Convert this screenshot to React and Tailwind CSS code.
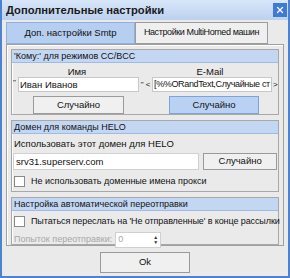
import { X } from 'lucide-react';

const font = { fontFamily: '"Liberation Sans", Arial, sans-serif' };

const Btn = ({ children, active, className = '' }) => (
    <div
        className={`flex items-center justify-center border text-[9.5px] ${active
            ? 'bg-[#b9d1f2] border-[#7ea3d8] text-[#111]'
            : 'bg-[#f0f0f0] border-[#9a9a9a] text-[#111]'
            } ${className}`}
    >
        {children}
    </div>
);

const Group = ({ title, children, className = '' }) => (
    <div className={`border border-[#a8a8a8] shadow-[inset_1px_1px_0_#fff] ${className}`}>
        <div className="h-[13px] bg-[#c3d7f3] border-b border-[#9fbbe3] px-[2px] text-[9px] leading-[13px] text-[#111] whitespace-nowrap">
            {title}
        </div>
        {children}
    </div>
);

const Checkbox = () => (
    <div className="w-[11px] h-[11px] border border-[#8a8a8a] bg-white shrink-0" />
);

export default function App() {
    return (
        <div style={font} className="w-[290px] h-[278px] bg-[#eaeaea] flex flex-col border-x-2 border-b-2 border-[#4d82d2] overflow-hidden">
            {/* Title bar */}
            <div className="h-[20px] -mx-[2px] bg-gradient-to-b from-[#d8e6f8] to-[#bcd1ef] flex items-center justify-between pl-[6px] pr-[3px] shrink-0">
                <span className="text-[11.2px] font-bold text-[#1a1a1a]">Дополнительные настройки</span>
                <div className="w-[14px] h-[14px] bg-[#3f7ad3] flex items-center justify-center">
                    <X size={10} strokeWidth={3} className="text-white" />
                </div>
            </div>

            {/* Tabs */}
            <div className="flex pl-[4px] pt-[2px] h-[24px] shrink-0">
                <div className="w-[129px] flex items-center justify-center bg-[#b6cef0] border border-[#8fb0e0] text-[9.5px] text-[#111]">
                    Доп. настройки Smtp
                </div>
                <div className="w-[133px] flex items-center justify-center bg-[#efefef] border border-[#9c9c9c] text-[9px] tracking-[-0.4px] text-[#111] whitespace-nowrap">
                    Настройки MultiHomed машин
                </div>
            </div>

            {/* Content panel */}
            <div className="mx-[4px] h-[202px] border border-[#a0a0a0] shadow-[inset_1px_1px_0_#fff] px-[4px] pt-[4px] flex flex-col gap-[5px]">
                <Group title="'Кому:' для режимов CC/BCC" className="h-[66px]">
                    <div className="flex text-[9.5px] text-[#111] pt-[2px] h-[13px] leading-[13px]">
                        <div className="w-[130px] text-center">Имя</div>
                        <div className="flex-1 text-center">E-Mail</div>
                    </div>
                    <div className="flex items-center mt-[1px] h-[15px] text-[9.5px] text-[#111]">
                        <span className="w-[5px] ml-[1px] text-[8px] self-start">"</span>
                        <div className="w-[121px] h-[15px] bg-white border border-[#c8c8c8] px-[1px] leading-[13px] overflow-hidden whitespace-nowrap">Иван Иванов</div>
                        <span className="w-[13px] text-center text-[8px] whitespace-nowrap">" &lt;</span>
                        <div className="w-[120px] h-[15px] bg-white border border-[#c8c8c8] px-[1px] leading-[13px] text-[9px] tracking-[-0.35px] overflow-hidden whitespace-nowrap">[%%ORandText,Случайные ст</div>
                        <span className="ml-[1px] text-[8px]">&gt;</span>
                    </div>
                    <div className="flex mt-[4px]">
                        <Btn className="ml-[21px] w-[91px] h-[18px]">Случайно</Btn>
                        <Btn active className="ml-[45px] w-[90px] h-[18px]">Случайно</Btn>
                    </div>
                </Group>

                <Group title="Домен для команды HELO" className="h-[73px]">
                    <div className="text-[9.5px] text-[#111] px-[2px] pt-[3px] leading-[14px] whitespace-nowrap overflow-hidden">
                        Использовать этот домен для HELO
                    </div>
                    <div className="flex items-center px-[1px] mt-[2px] gap-[4px]">
                        <div className="w-[187px] h-[17px] bg-white border border-[#d0d0d0] px-[2px] text-[9.5px] leading-[15px] text-[#111]">srv31.superserv.com</div>
                        <Btn className="w-[74px] h-[17px]">Случайно</Btn>
                    </div>
                    <div className="flex items-center gap-[6px] px-[2px] mt-[5px] text-[9px] text-[#111] whitespace-nowrap">
                        <Checkbox />
                        <span>Не использовать доменные имена прокси</span>
                    </div>
                </Group>

                <Group title="Настройка автоматической переотправки" className="h-[48px]">
                    <div className="flex items-center gap-[6px] px-[2px] mt-[4px] text-[9px] tracking-[-0.1px] text-[#111] whitespace-nowrap">
                        <Checkbox />
                        <span>Пытаться переслать на 'Не отправленные' в конце рассылки</span>
                    </div>
                    <div className="flex items-center gap-[3px] px-[2px] mt-[3px] text-[9px]">
                        <span className="text-[#a8a8a8]">Попыток переотправки:</span>
                        <div className="w-[46px] h-[16px] bg-white border border-[#d0d0d0] flex items-center justify-between pl-[2px] pr-[2px]">
                            <span className="text-[#a8a8a8]">0</span>
                            <span className="flex flex-col items-center leading-[5px] text-[5px] text-[#333]">
                                <span>▲</span>
                                <span>▼</span>
                            </span>
                        </div>
                    </div>
                </Group>
            </div>

            {/* Footer */}
            <div className="flex-1 flex items-center justify-center pt-[2px]">
                <Btn className="w-[90px] h-[21px]">Ok</Btn>
            </div>
        </div>
    );
}
